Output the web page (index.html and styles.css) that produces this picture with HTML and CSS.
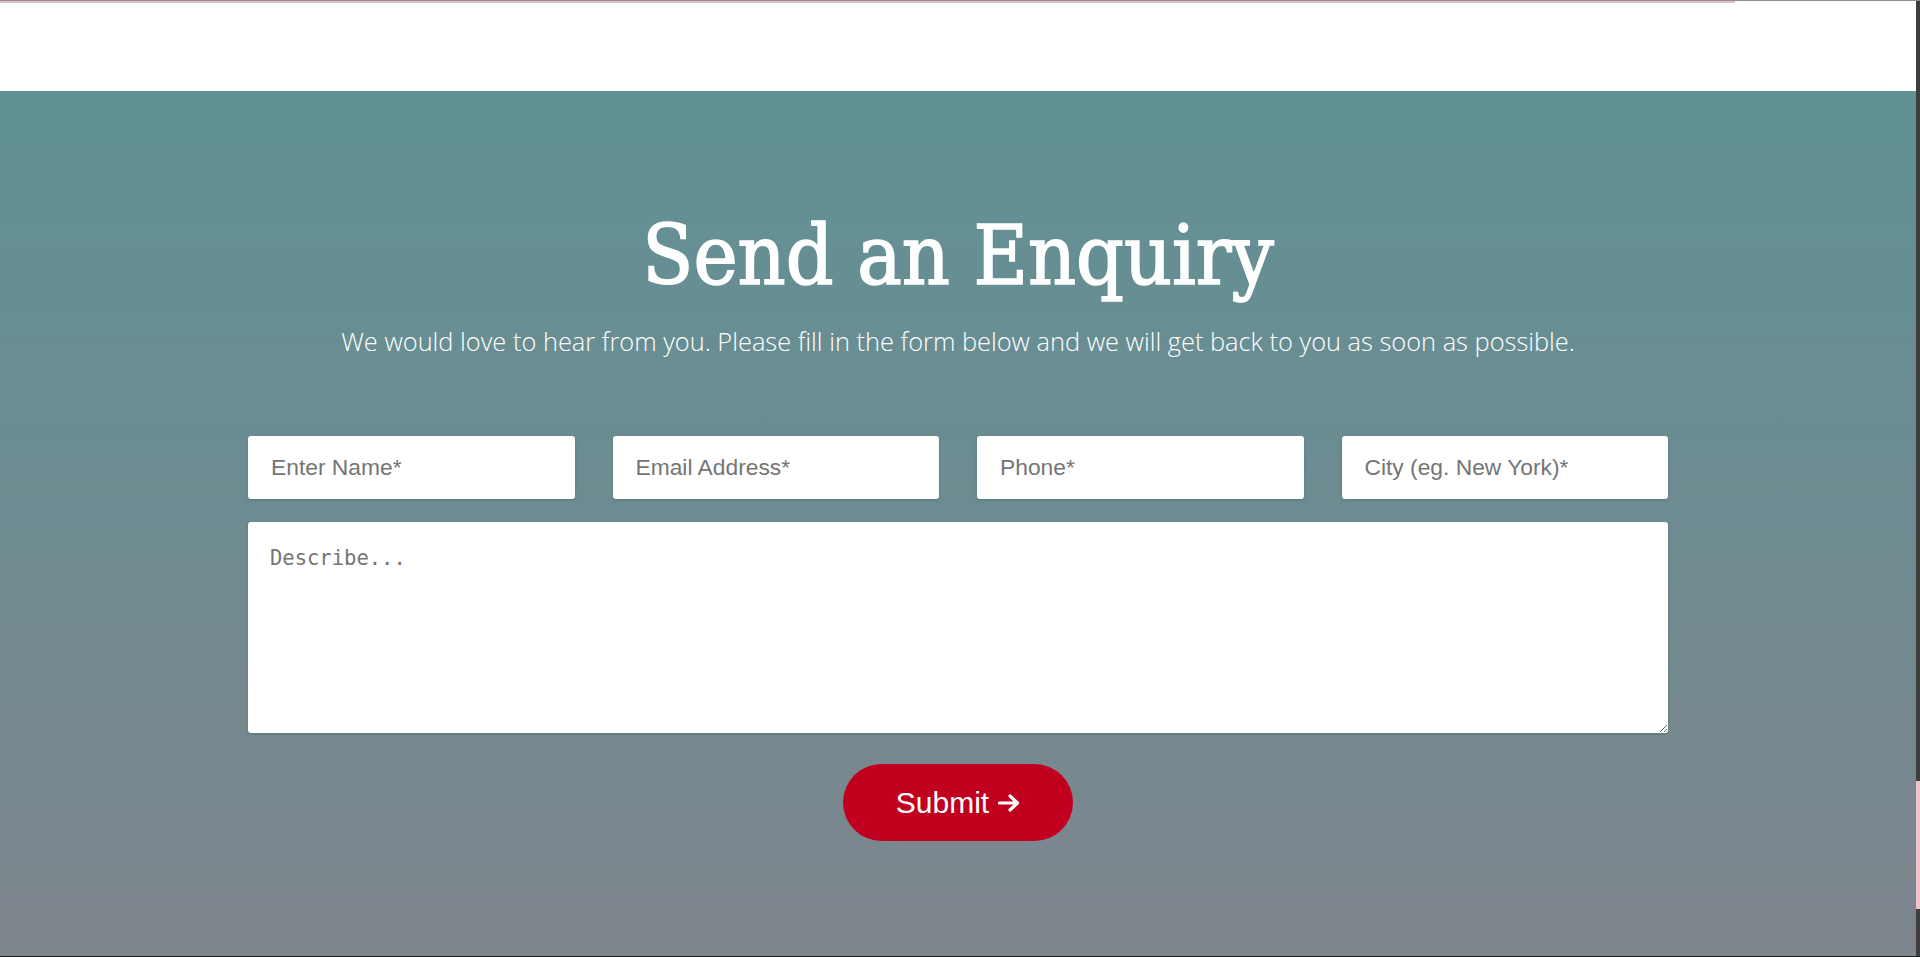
FILE: index.html
```html
<!DOCTYPE html>
<html lang="en">
<head>
<meta charset="utf-8">
<title>Send an Enquiry</title>
<link rel="stylesheet" href="styles.css">
</head>
<body>
<div class="screen">
  <div class="page">
    <header class="topbar">
      <div class="progress"></div>
    </header>
    <section class="enquiry">
      <h1 class="enquiry-title">Send an Enquiry</h1>
      <p class="enquiry-lead">We would love to hear from you. Please fill in the form below and we will get back to you as soon as possible.</p>
      <form class="enquiry-form">
        <div class="field-row">
          <input class="field" type="text" placeholder="Enter Name*">
          <input class="field" type="email" placeholder="Email Address*">
          <input class="field" type="tel" placeholder="Phone*">
          <input class="field" type="text" placeholder="City (eg. New York)*">
        </div>
        <textarea class="field-area" placeholder="Describe..."></textarea>
        <button class="submit" type="button">Submit
          <svg class="submit-arrow" viewBox="0 0 22 18" width="22" height="18" aria-hidden="true"><path d="M1.5 9H19.5M12 2L19.5 9L12 16" fill="none" stroke="#fff" stroke-width="3.2" stroke-linecap="round" stroke-linejoin="round"/></svg>
        </button>
      </form>
    </section>
  </div>
  <div class="scrollbar"><div class="scrollbar-thumb"></div></div>
</div>
</body>
</html>
```

FILE: styles.css
```css
* { box-sizing: border-box; }

html, body {
  margin: 0;
  padding: 0;
  height: 100%;
  overflow: hidden;
}

.screen {
  display: flex;
  height: 957px;
  border-top: 1px solid #8e8e8e;
  border-bottom: 1px solid #1e1e1e;
  background: #fff;
}

.page {
  flex: 1;
  display: flex;
  flex-direction: column;
  min-width: 0;
}

.topbar {
  height: 90px;
  background: #fff;
}

.progress {
  width: 1735px;
  height: 2px;
  background: #e7bbc6;
}

.enquiry {
  flex: 1;
  display: flex;
  flex-direction: column;
  align-items: center;
  background: linear-gradient(to bottom, #609195 0%, #6e8c91 50%, #7f858d 100%);
  color: #fff;
  padding-top: 123px;
}

.enquiry-title {
  margin: 0;
  font-family: "DejaVu Serif", "Liberation Serif", serif;
  font-stretch: condensed;
  font-weight: 400;
  font-size: 83px;
  line-height: 1;
  letter-spacing: 0;
  -webkit-text-stroke: 1.6px #fff;
}

.enquiry-lead {
  margin: 28px 0 0;
  font-family: "Open Sans", "Noto Sans", sans-serif;
  font-weight: 300;
  font-size: 25.4px;
  line-height: 1.3;
}

.enquiry-form {
  width: 1420px;
  margin-top: 78px;
  display: flex;
  flex-direction: column;
  align-items: center;
}

.field-row {
  width: 100%;
  display: grid;
  grid-template-columns: repeat(4, minmax(0, 1fr));
  column-gap: 38px;
}

.field {
  width: 100%;
  min-width: 0;
  height: 63px;
  border: 0;
  border-radius: 3px;
  background: #fff;
  padding: 0 23px;
  font-family: "Liberation Sans", Arial, sans-serif;
  font-size: 22.8px;
  color: #333;
  box-shadow: 0 1px 3px rgba(0, 0, 0, 0.18);
  outline: none;
}

.field::placeholder,
.field-area::placeholder {
  color: #757575;
}

.field-area {
  width: 100%;
  height: 211px;
  margin-top: 23px;
  border: 0;
  border-radius: 3px;
  background: #fff;
  padding: 24px 22px;
  font-family: "DejaVu Sans Mono", "Liberation Mono", monospace;
  font-size: 20.5px;
  box-shadow: 0 1px 3px rgba(0, 0, 0, 0.18);
  outline: none;
  display: block;
}

.submit {
  margin-top: 31px;
  width: 230px;
  height: 77px;
  border: 0;
  border-radius: 39px;
  background: #c1001f;
  color: #fff;
  font-family: "Liberation Sans", Arial, sans-serif;
  font-size: 30px;
  display: flex;
  align-items: center;
  justify-content: center;
  gap: 9px;
  cursor: pointer;
}

.submit-arrow {
  display: block;
}

.scrollbar {
  width: 4px;
  flex: none;
  background: #3e3e3e;
  padding-top: 780px;
}

.scrollbar-thumb {
  height: 128px;
  background: #f4c0cc;
}
```
